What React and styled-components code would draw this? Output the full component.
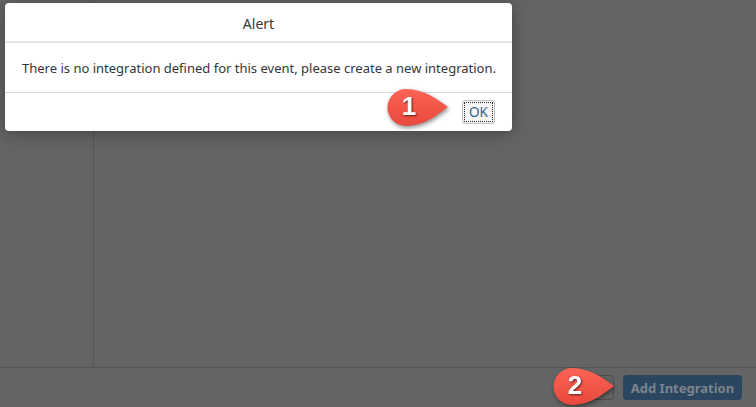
import React from "react";
import styled, { createGlobalStyle } from "styled-components";

const GlobalStyle = createGlobalStyle`
  html, body {
    margin: 0;
    padding: 0;
    width: 756px;
    height: 407px;
    overflow: hidden;
    background: #646464;
    font-family: "Noto Sans", "Liberation Sans", Arial, sans-serif;
  }
`;

const Page = styled.div`
  position: relative;
  width: 756px;
  height: 407px;
  display: flex;
  flex-direction: column;
  background: #646464;
`;

const Content = styled.div`
  height: 368px;
  display: flex;
  border-bottom: 1px solid #555555;
  box-sizing: border-box;
`;

const SidePanel = styled.div`
  width: 94px;
  border-right: 1px solid #575757;
  box-sizing: border-box;
`;

const MainPanel = styled.div`
  flex: 1;
`;

const Footer = styled.div`
  flex: 1;
  display: flex;
  align-items: center;
  justify-content: flex-end;
  gap: 9px;
  padding-right: 14px;
`;

const GhostButton = styled.button`
  width: 56px;
  height: 25px;
  border: 1px solid #4d4d4d;
  border-radius: 4px;
  background: transparent;
`;

const PrimaryButton = styled.button`
  height: 25px;
  width: 119px;
  padding: 0;
  border: none;
  border-radius: 4px;
  background: #2a4660;
  color: #7d848b;
  font-family: "Noto Sans", "Liberation Sans", Arial, sans-serif;
  font-size: 13px;
  font-weight: bold;
`;

const Dialog = styled.div`
  position: absolute;
  left: 5px;
  top: 3px;
  width: 507px;
  height: 128px;
  background: #ffffff;
  border-radius: 4px;
  box-shadow: 0 2px 16px rgba(0, 0, 0, 0.35);
  display: flex;
  flex-direction: column;
`;

const DialogTitle = styled.div`
  height: 40px;
  display: flex;
  align-items: center;
  justify-content: center;
  padding-top: 2px;
  box-sizing: border-box;
  font-size: 14px;
  color: #32363a;
  border-bottom: 2px solid #e5e5e5;
`;

const DialogBody = styled.div`
  height: 49px;
  display: flex;
  align-items: center;
  padding-left: 17px;
  font-size: 13px;
  color: #32363a;
  border-bottom: 1px solid #d9d9d9;
`;

const DialogFooter = styled.div`
  flex: 1;
  display: flex;
  align-items: center;
  justify-content: flex-end;
  padding-right: 17px;
`;

const OkButton = styled.button`
  width: 33px;
  height: 24px;
  padding: 0;
  background: #f7f7f7;
  border: 1px solid #bfbfbf;
  border-radius: 3px;
  outline: 1px dotted #222;
  outline-offset: -3px;
  color: #346187;
  font-family: "Noto Sans", "Liberation Sans", Arial, sans-serif;
  font-size: 13.5px;
`;

const Callout = styled.div`
  position: absolute;
  left: ${(p) => p.x}px;
  top: ${(p) => p.y}px;
  width: 64px;
  height: 40px;
  filter: drop-shadow(1px 2px 2px rgba(0, 0, 0, 0.45));
  svg {
    position: absolute;
    inset: 0;
  }
`;

const CalloutNumber = styled.span`
  position: absolute;
  left: 2px;
  top: 0;
  width: 40px;
  height: 37px;
  display: flex;
  align-items: center;
  justify-content: center;
  color: #ffffff;
  font-family: "Liberation Sans", Arial, sans-serif;
  font-weight: bold;
  font-size: 26px;
  text-shadow: 1px 1px 2px rgba(0, 0, 0, 0.6);
`;

const Marker = ({ x, y, n, id }) => (
  <Callout x={x} y={y}>
    <svg width="64" height="40" viewBox="0 0 64 40">
      <defs>
        <linearGradient id={id} x1="0" y1="0" x2="0" y2="1">
          <stop offset="0" stopColor="#fb6455" />
          <stop offset="1" stopColor="#e8493c" />
        </linearGradient>
      </defs>
      <path
        d="M61 19 C50 11, 38 1.5, 19 1 A18.5 18.5 0 1 0 19 38 C38 37.5, 50 27, 61 19 Z"
        fill={`url(#${id})`}
      />
    </svg>
    <CalloutNumber>{n}</CalloutNumber>
  </Callout>
);

export default function App() {
  return (
    <>
      <GlobalStyle />
      <Page>
        <Content>
          <SidePanel />
          <MainPanel />
        </Content>
        <Footer>
          <GhostButton />
          <PrimaryButton>Add Integration</PrimaryButton>
        </Footer>
        <Dialog>
          <DialogTitle>Alert</DialogTitle>
          <DialogBody>
            There is no integration defined for this event, please create a new integration.
          </DialogBody>
          <DialogFooter>
            <OkButton>OK</OkButton>
          </DialogFooter>
        </Dialog>
        <Marker x={387} y={88} n="1" id="g1" />
        <Marker x={553} y={367} n="2" id="g2" />
      </Page>
    </>
  );
}
